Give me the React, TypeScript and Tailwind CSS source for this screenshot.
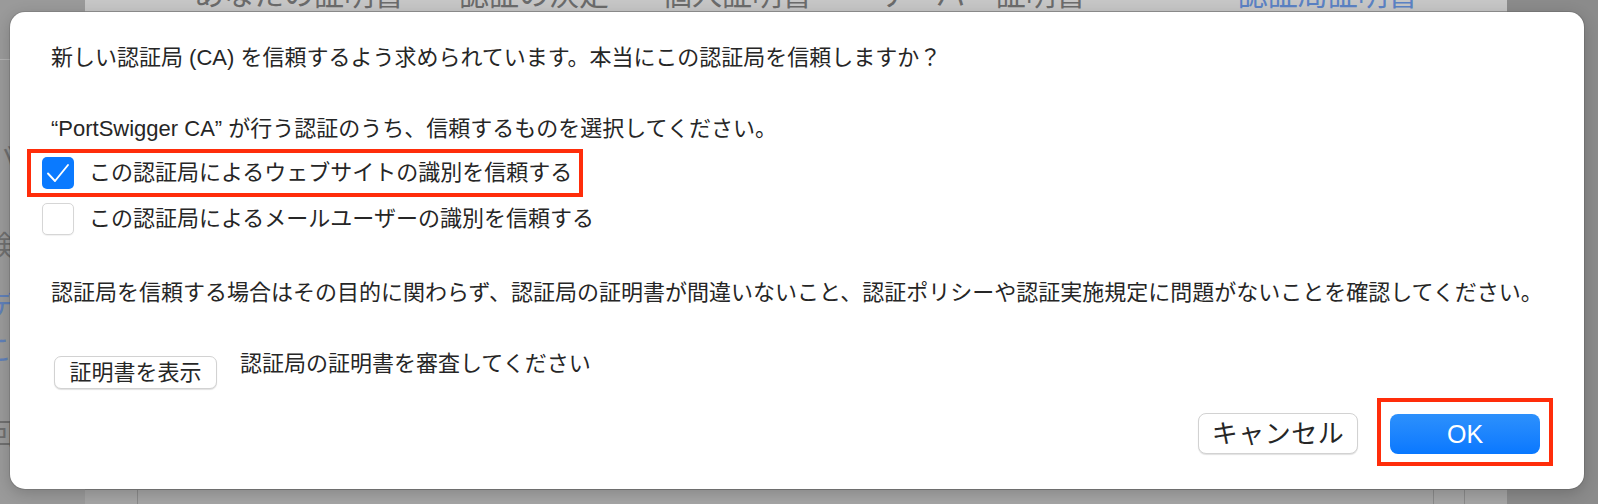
import React from "react";

// Tabs of the window that sits behind the sheet (only their lower edge shows)
const tabs = [
  { label: "あなたの証明書", ml: "ml-[109px]", active: false },
  { label: "認証の決定", ml: "ml-[55px]", active: false },
  { label: "個人証明書", ml: "ml-[53px]", active: false },
  { label: "サーバー証明書", ml: "ml-[64px]", active: false },
  { label: "認証局証明書", ml: "ml-[152px]", active: true },
];

function Backdrop() {
  return (
    <div className="flex h-full">
      {/* sidebar of the window behind */}
      <div className="w-[85px] bg-[#9a9a9a] flex flex-col text-[28px] leading-[30px] text-[#6f6f6f] overflow-hidden">
        <div className="mt-[59px] h-px bg-[#b2b2b2]" />
        <span className="mt-[84px] -ml-[12px]">バ</span>
        <span className="mt-[58px] -ml-[14px]">検</span>
        <span className="mt-[30px] -ml-[12px] text-[#5f7fb8]">デ</span>
        <span className="mt-[14px] -ml-[16px] text-[#5f7fb8]">こ</span>
        <span className="mt-[54px] -ml-[14px]">回</span>
      </div>

      <div className="w-[1422px] flex flex-col">
        <div className="h-[12px] bg-[#c6c6c6] border-b border-[#a2a2a2] flex overflow-hidden">
          {tabs.map((t) => (
            <span
              key={t.label}
              className={`${t.ml} -mt-[20px] text-[30px] leading-[30px] whitespace-nowrap ${
                t.active ? "text-[#5b82c4]" : "text-[#6b6b6b]"
              }`}
            >
              {t.label}
            </span>
          ))}
        </div>
        <div className="flex-1 bg-[#c9c9c9]" />
        <div className="h-[15px] bg-[#a5a5a5] border-t border-[#8e8e8e] flex">
          <div className="ml-[52px] w-px bg-[#8a8a8a]" />
          <div className="ml-[1295px] w-px bg-[#8a8a8a]" />
          <div className="ml-[30px] w-px bg-[#8a8a8a]" />
        </div>
      </div>

      <div className="flex-1 bg-[#8b8b8b]" />
    </div>
  );
}

function CheckBox({ checked }: { checked: boolean }) {
  if (checked) {
    return (
      <div className="w-[32px] h-[32px] shrink-0 rounded-[5px] bg-[#0a7aff] flex items-center justify-center">
        <svg width="32" height="32" viewBox="0 0 32 32" fill="none">
          <path
            d="M6 16.5 L13 24 L26 8"
            stroke="white"
            strokeWidth="1.9"
            strokeLinecap="round"
            strokeLinejoin="round"
          />
        </svg>
      </div>
    );
  }
  return (
    <div className="w-[32px] h-[32px] shrink-0 rounded-[5px] bg-white border-[1.5px] border-[#d6d6d6] shadow-[0_1px_1px_rgba(0,0,0,0.06)]" />
  );
}

export default function App() {
  return (
    <div className="relative w-[1598px] h-[504px] overflow-hidden bg-[#a4a4a4] font-['Liberation_Sans','Noto_Sans_CJK_JP',sans-serif]">
      <Backdrop />

      {/* trust sheet */}
      <div className="absolute left-[10px] top-[12px] w-[1574px] h-[477px] rounded-[15px] bg-white shadow-[0_0_0_1px_rgba(0,0,0,0.1),0_4px_16px_rgba(0,0,0,0.2)] pl-[41px] pr-[31px] pt-[31px] text-[22px] leading-[30px] text-[#262626] flex flex-col">
        <p>新しい認証局 (CA) を信頼するよう求められています。本当にこの認証局を信頼しますか？</p>
        <p className="mt-[41px]">“PortSwigger CA” が行う認証のうち、信頼するものを選択してください。</p>

        <div className="mt-[5px] -ml-[24px] w-[556px] h-[48px] border-4 border-[#ff2d0a] pl-[11px] flex items-center gap-[15px]">
          <CheckBox checked />
          <span>この認証局によるウェブサイトの識別を信頼する</span>
        </div>
        <div className="mt-[6px] -ml-[9px] h-[32px] flex items-center gap-[15px]">
          <CheckBox checked={false} />
          <span>この認証局によるメールユーザーの識別を信頼する</span>
        </div>

        <p className="mt-[43px]">
          認証局を信頼する場合はその目的に関わらず、認証局の証明書が間違いないこと、認証ポリシーや認証実施規定に問題がないことを確認してください。
        </p>

        <div className="mt-[48px] ml-[3px] flex items-start gap-[23px]">
          <button className="w-[163px] h-[33px] rounded-[7px] bg-white border border-[#d2d2d2] shadow-[0_1px_1px_rgba(0,0,0,0.12)] flex items-center justify-center">
            証明書を表示
          </button>
          <span className="-mt-[7px]">認証局の証明書を審査してください</span>
        </div>

        <div className="mt-[9px] flex justify-end items-start gap-[19px]">
          <button className="mt-[15px] w-[160px] h-[41px] rounded-[8px] bg-white border border-[#d2d2d2] shadow-[0_1px_1px_rgba(0,0,0,0.12)] text-[26px] tracking-[0.5px] text-[#262626] flex items-center justify-center">
            キャンセル
          </button>
          <div className="border-4 border-[#ff2d0a] pt-[12px] pb-[8px] px-[9px]">
            <button className="w-[150px] h-[40px] rounded-[8px] bg-gradient-to-b from-[#2c90fc] to-[#0878ff] text-white text-[25px] flex items-center justify-center">
              OK
            </button>
          </div>
        </div>
      </div>
    </div>
  );
}
